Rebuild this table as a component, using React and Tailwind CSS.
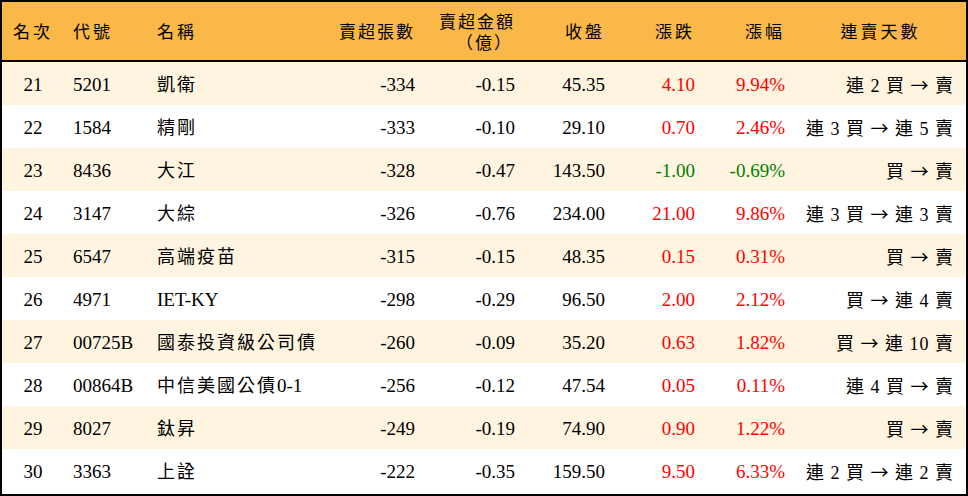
import React from 'react';

const rows = [
  ['21', '5201', '凱衛', '-334', '-0.15', '45.35', '4.10', '9.94%', '連 2 買 → 賣'],
  ['22', '1584', '精剛', '-333', '-0.10', '29.10', '0.70', '2.46%', '連 3 買 → 連 5 賣'],
  ['23', '8436', '大江', '-328', '-0.47', '143.50', '-1.00', '-0.69%', '買 → 賣'],
  ['24', '3147', '大綜', '-326', '-0.76', '234.00', '21.00', '9.86%', '連 3 買 → 連 3 賣'],
  ['25', '6547', '高端疫苗', '-315', '-0.15', '48.35', '0.15', '0.31%', '買 → 賣'],
  ['26', '4971', 'IET-KY', '-298', '-0.29', '96.50', '2.00', '2.12%', '買 → 連 4 賣'],
  ['27', '00725B', '國泰投資級公司債', '-260', '-0.09', '35.20', '0.63', '1.82%', '買 → 連 10 賣'],
  ['28', '00864B', '中信美國公債0-1', '-256', '-0.12', '47.54', '0.05', '0.11%', '連 4 買 → 賣'],
  ['29', '8027', '鈦昇', '-249', '-0.19', '74.90', '0.90', '1.22%', '買 → 賣'],
  ['30', '3363', '上詮', '-222', '-0.35', '159.50', '9.50', '6.33%', '連 2 買 → 連 2 賣'],
];

const font = { fontFamily: '"Liberation Serif", "Noto Sans CJK TC", serif' };

// 中文字加字距，英數字不加
function Name({ text }) {
  const parts = text.split(/([A-Za-z0-9\-]+)/).filter(Boolean);
  return parts.map((p, i) =>
    /^[A-Za-z0-9\-]+$/.test(p) ? (
      <span key={i} className="tracking-normal">{p}</span>
    ) : (
      <span key={i} className="text-[18px] tracking-[2px]">{p}</span>
    )
  );
}

// 箭頭用 CJK 字型，較長
function Streak({ text }) {
  const parts = text.split('→');
  return (
    <>
      {parts[0]}
      <span style={{ fontFamily: '"Noto Sans CJK TC", sans-serif' }}>→</span>
      {parts[1]}
    </>
  );
}

export default function App() {
  return (
    <div className="w-[968px] h-[496px] bg-white text-black text-[19px]" style={font}>
      <div className="border-2 border-black h-full flex flex-col">
        {/* 表頭 */}
        <div className="h-[60px] pt-[4px] bg-[#f9b848] flex items-center border-b-2 border-black text-[17px]">
          <div className="w-[62px] text-center tracking-[3px]">名次</div>
          <div className="w-[84px] pl-[9px] tracking-[3px]">代號</div>
          <div className="w-[182px] pl-[9px] tracking-[3px]">名稱</div>
          <div className="w-[95px] pr-[10px] text-right tracking-[2px]">賣超張數</div>
          <div className="w-[100px] pr-[10px] text-right leading-[21px] tracking-[2px]">
            <div>賣超金額</div>
            <div className="pr-[2px]">（億）</div>
          </div>
          <div className="w-[90px] pr-[10px] text-right tracking-[3px]">收盤</div>
          <div className="w-[90px] pr-[10px] text-right tracking-[3px]">漲跌</div>
          <div className="w-[90px] pr-[10px] text-right tracking-[3px]">漲幅</div>
          <div className="flex-1 text-center tracking-[3px]">連賣天數</div>
        </div>

        {rows.map((r, i) => {
          const down = r[6].startsWith('-');
          const color = down ? 'text-[#008000]' : 'text-[#ff0000]';
          return (
            <div
              key={r[0]}
              className={`h-[43px] pt-[3px] flex items-center ${i % 2 === 0 ? 'bg-[#fff4df]' : 'bg-white'}`}
            >
              <div className="w-[62px] text-center">{r[0]}</div>
              <div className="w-[84px] pl-[9px]">{r[1]}</div>
              <div className="w-[182px] pl-[9px] whitespace-nowrap">
                <Name text={r[2]} />
              </div>
              <div className="w-[95px] pr-[10px] text-right">{r[3]}</div>
              <div className="w-[100px] pr-[10px] text-right">{r[4]}</div>
              <div className="w-[90px] pr-[10px] text-right">{r[5]}</div>
              <div className={`w-[90px] pr-[10px] text-right ${color}`}>{r[6]}</div>
              <div className={`w-[90px] pr-[10px] text-right ${color}`}>{r[7]}</div>
              <div className="flex-1 pr-[12px] text-right whitespace-nowrap text-[18px] tracking-[1px]">
                <Streak text={r[8]} />
              </div>
            </div>
          );
        })}
      </div>
    </div>
  );
}
